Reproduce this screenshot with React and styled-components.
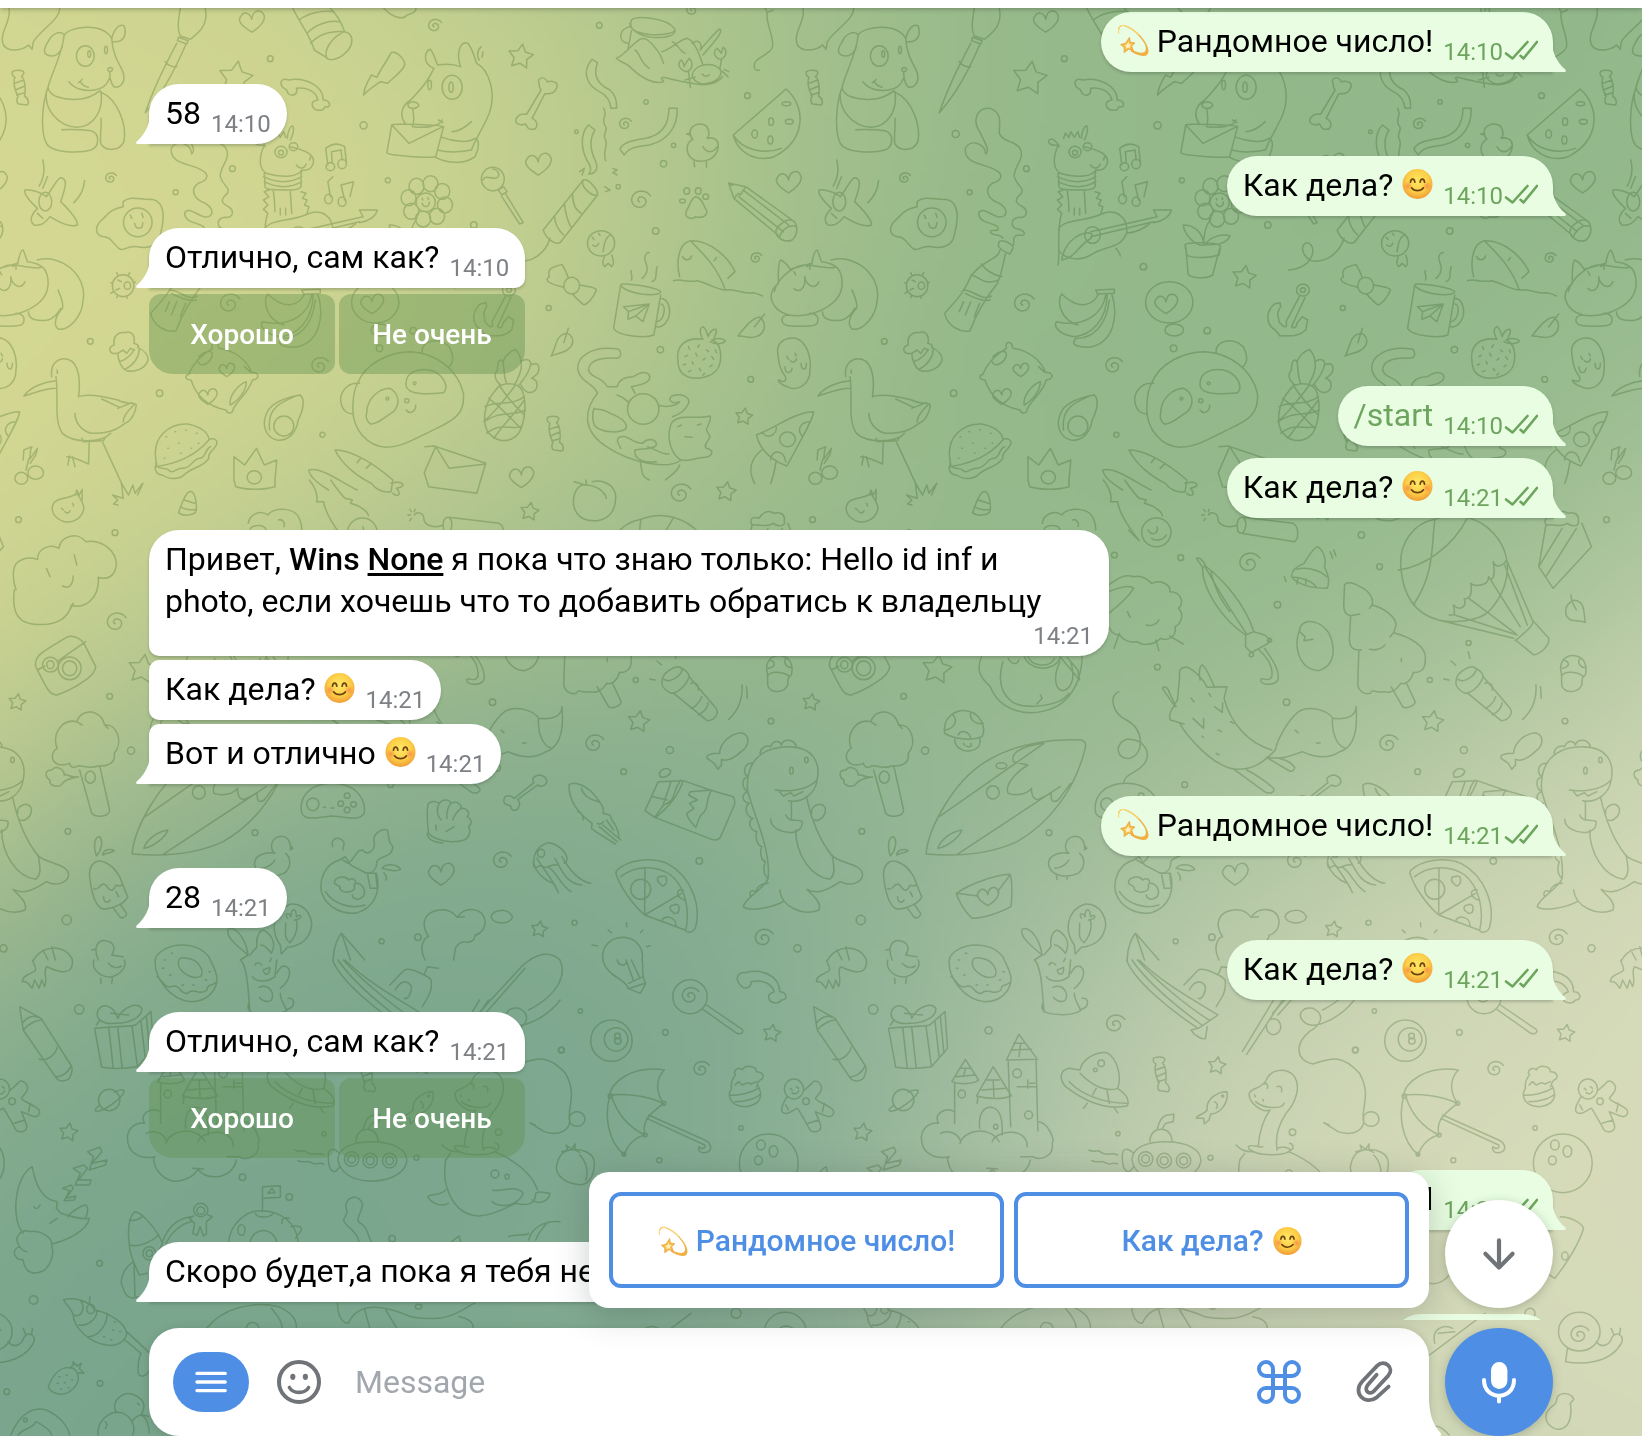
import React, { useEffect, useRef } from "react";
import styled, { createGlobalStyle, css } from "styled-components";

const BLUE = "#4e8ee4";
const GREY = "#707377";
const OUT_BG = "#e8fde1";
const OUT_GREEN = "#6da45e";

const Global = createGlobalStyle`
  html, body { margin: 0; padding: 0; }
  body { width: 1642px; height: 1436px; overflow: hidden; font-family: Roboto, "Noto Sans", sans-serif; }
  * { box-sizing: border-box; }
`;

/* ---------- wallpaper gradient ---------- */

const GRADIENT = [
  { c: [217, 220, 187], x: 0.8, y: 0.9 },
  { c: [121, 165, 141], x: 0.35, y: 0.75 },
  { c: [213, 216, 145], x: 0.2, y: 0.1 },
  { c: [145, 183, 138], x: 0.65, y: 0.25 },
];

function paintGradient(canvas) {
  const w = canvas.width;
  const h = canvas.height;
  const ctx = canvas.getContext("2d");
  const img = ctx.createImageData(w, h);
  for (let y = 0; y < h; y++) {
    const dy = y / h - 0.5;
    for (let x = 0; x < w; x++) {
      const dx = x / w - 0.5;
      const swirl = 0.35 * Math.sqrt(dx * dx + dy * dy);
      const theta = swirl * swirl * 0.8 * 8;
      const s = Math.sin(theta);
      const c = Math.cos(theta);
      const px = Math.max(0, Math.min(1, 0.5 + dx * c - dy * s));
      const py = Math.max(0, Math.min(1, 0.5 + dx * s + dy * c));
      let sum = 0;
      const rgb = [0, 0, 0];
      GRADIENT.forEach((g) => {
        const d = Math.max(0, 0.9 - Math.hypot(px - g.x, py - g.y)) ** 4;
        sum += d;
        for (let k = 0; k < 3; k++) rgb[k] += d * g.c[k];
      });
      const o = (y * w + x) * 4;
      for (let k = 0; k < 3; k++) img.data[o + k] = rgb[k] / sum;
      img.data[o + 3] = 255;
    }
  }
  ctx.putImageData(img, 0, 0);
}

/* ---------- wallpaper doodles ---------- */

const ell = (cx, cy, rx, ry = rx) =>
  `M${cx - rx} ${cy}a${rx} ${ry} 0 1 0 ${rx * 2} 0a${rx} ${ry} 0 1 0 ${-rx * 2} 0`;
const dots = (...list) => list.map(([x, y, r]) => ell(x, y, r, r * 1.07)).join("");
const star = (cx, cy, r, rot = 0.15) => {
  let d = "";
  for (let i = 0; i < 10; i++) {
    const a = rot - Math.PI / 2 + (i * Math.PI) / 5;
    const q = i % 2 ? r * 0.52 : r;
    d += `${i ? "L" : "M"}${(cx + Math.cos(a) * q * 0.95).toFixed(1)} ${(cy + Math.sin(a) * q).toFixed(1)}`;
  }
  return d + "Z";
};
const heart = (cx, cy, r) =>
  `M${cx} ${cy + r * 0.9}C${cx - r * 0.6} ${cy + r * 0.5} ${cx - r * 1.2} ${cy} ${cx - r * 0.9} ${cy - r * 0.4}C${cx - r * 0.6} ${cy - r} ${cx - r * 0.1} ${cy - r * 0.7} ${cx} ${cy - r * 0.2}C${cx + r * 0.1} ${cy - r * 1.1} ${cx + r * 0.8} ${cy - r * 1.1} ${cx + r} ${cy - r * 0.5}C${cx + r * 1.1} ${cy} ${cx + r * 0.5} ${cy + r * 0.6} ${cx} ${cy + r * 0.9}Z`;
const swirl = (cx, cy, r) => {
  let d = "";
  for (let i = 0; i <= 26; i++) {
    const a = 2.2 + i * 0.38;
    const q = r * (0.12 + (0.88 * i) / 26);
    d += `${i ? "L" : "M"}${(cx + Math.cos(a) * q).toFixed(1)} ${(cy + Math.sin(a) * q).toFixed(1)}`;
  }
  return d;
};
const petals = (cx, cy) => {
  let d = "";
  for (let i = 0; i < 8; i++) {
    const a = (i * Math.PI) / 4 + 0.2;
    d += ell(cx + Math.cos(a) * 52, cy + Math.sin(a) * 54, 21, 24);
  }
  return d;
};

const CANDY =
  "M690 215C695 210 720 208 722 218C720 225 718 228 715 230C725 235 728 270 724 288C735 295 738 312 730 315L708 312C700 310 702 295 706 288C695 270 692 245 697 232C690 228 688 220 690 215ZM696 250L722 240M698 270L725 258M702 285L724 278";

const KX = 560 / 1568;
const KX2 = 562 / 1568;

const DOODLES = [
  {
    x: 560, y: 0, k: KX, d: [
      "M200 60C215 45 300 55 320 85C330 110 290 115 255 112C215 105 190 85 200 60ZM196 70C195 90 215 100 255 104C290 106 318 100 322 90M196 80C165 85 160 125 190 130M200 92L190 150M158 175C180 165 185 150 215 125C235 105 250 118 275 155C285 170 285 180 290 190M285 155C310 150 325 125 355 115C375 120 390 160 400 195M158 175C165 185 190 190 200 205C230 235 265 255 290 245C290 235 275 235 290 232C320 240 350 248 370 250C410 260 440 250 455 230M370 130C385 118 400 125 393 150C400 140 440 90 447 87C455 92 450 105 400 165M210 150C225 160 225 190 250 205M315 125C330 130 330 150 350 160",
      "M370 225C375 195 425 180 450 210C455 235 430 250 400 252C385 250 372 240 370 225ZM340 180C325 190 335 210 355 215C370 210 375 190 362 175C355 185 350 190 348 200C345 190 345 185 340 180ZM440 145C425 155 435 175 450 178C465 172 470 150 457 142C452 150 452 155 452 160C448 155 445 150 440 145ZM452 180L448 205M360 215L365 262M350 240L378 232M455 215L470 230M460 208L472 215M398 222C405 232 415 230 418 224",
      "M575 25L580 38L597 30M580 38C575 70 600 110 595 140C590 165 550 170 545 190C542 205 545 212 558 211",
      "M680 25C690 60 650 100 665 135C680 160 720 150 735 135L745 148L748 128C755 100 825 60 822 25",
      "M835 105C825 90 800 100 790 125C775 150 775 165 800 168C815 168 825 155 830 140M835 105C850 80 940 65 968 115C975 85 990 70 1003 78C1010 100 1005 130 970 125M968 115C970 160 985 185 995 205C1010 235 1000 260 980 262C970 262 962 240 962 215M835 105C830 160 800 220 790 260M958 205C965 200 975 205 968 213C960 217 955 212 958 205M848 245C860 265 890 275 920 270C940 268 955 255 962 235M875 248C880 243 885 240 885 238M880 245C885 255 895 260 902 262M790 260C790 290 835 300 870 298C900 298 920 285 935 272M785 280C780 330 820 380 870 382C920 380 945 330 938 275M790 260C770 320 770 400 785 430C800 460 880 460 910 450C935 440 935 400 910 392C880 388 850 388 828 389M935 275C990 300 1010 380 1002 425C990 455 950 455 937 430C935 400 940 380 938 355",
      ell(894, 168, 25, 31), ell(905, 162, 4, 10), ell(952, 150, 4, 11), CANDY,
      "M633 267C690 320 690 420 600 470C540 490 495 450 485 405ZM485 405C510 450 570 465 620 445",
      ell(634, 311, 12, 6), ell(591, 365, 7, 11), ell(642, 365, 11, 7), ell(545, 402, 8, 12), ell(589, 420, 7, 12),
      "M365 400L355 402L365 405C360 375 390 365 410 378C420 395 420 405 412 415C430 410 445 420 443 440C440 480 400 490 375 480C350 465 350 430 372 418C365 412 365 405 365 400M400 440C410 460 430 460 440 440M375 485L377 500M410 485L410 502",
      "M90 178L105 188C90 230 110 255 140 270C155 285 160 305 158 325L143 325C140 300 130 285 110 275C75 255 60 215 90 178ZM305 325L328 325C330 370 310 420 250 435C210 440 190 445 180 465L168 448C175 425 210 420 240 415C290 405 305 370 305 325ZM80 375L98 390C80 420 85 450 98 480C110 505 100 522 80 522M80 375C55 400 60 450 75 480C88 500 90 512 80 522M122 325C135 345 115 355 125 375C140 390 115 400 128 420C135 440 118 455 128 482",
      "M65 540C80 535 108 570 105 585C90 590 55 560 65 540ZM65 540L-47 690C-40 715 -15 735 0 728L105 585M35 580C35 600 40 630 60 640M12 610C15 635 20 660 30 680M-15 648C-15 670 -5 690 10 705M-28 715C-40 760 -80 790 -120 782C-150 765 -150 730 -130 728C-100 740 -115 805 -183 810M55 515L68 505L62 525M148 505L160 510L148 518L160 525M125 560L140 570L128 575",
      swirl(225, 602, 32), swirl(182, 373, 20), swirl(965, 535, 18), swirl(549, 775, 18), swirl(1298, 912, 33), swirl(1550, 1098, 28), swirl(370, 30, 20),
      ell(355, 573, 8, 10), ell(387, 573, 8, 10), ell(343, 603, 8, 6), ell(408, 590, 8, 8),
      "M380 590C365 595 365 615 355 630C345 655 370 660 380 650C395 655 415 650 410 630C400 615 398 592 380 590Z",
      "M472 549L487 595L610 705M472 549L520 560L650 660M487 595L500 580L505 585L520 560M500 590L625 695M515 572L640 675M605 700C600 680 635 655 648 660C665 665 670 700 650 720C630 730 610 715 605 700M615 710C620 690 645 670 660 680M474 555L485 555",
      heart(640, 547, 35), heart(1360, 65, 35),
      "M725 570C740 565 775 580 785 590C800 570 815 535 825 533C845 535 840 560 825 605C840 620 875 660 872 675C850 685 810 660 795 650C785 665 770 680 750 675C735 660 745 640 760 625C745 610 720 585 725 570Z", ell(782, 605, 18, 28),
      "M775 480C782 510 775 540 765 558M788 530L775 565M892 542C890 570 880 590 862 608M760 640L775 655",
      "M1000 605C1020 585 1050 600 1080 598C1120 605 1115 660 1105 700C1100 745 1060 745 1040 740C1010 735 1005 755 990 747C970 730 965 710 945 710C920 705 920 680 940 660C960 640 970 625 1000 620Z", ell(1041, 667, 40, 43),
      "M1032 670C1036 690 1055 690 1055 668M1020 645L1024 655M1052 640L1056 652",
      "M1160 25C1155 60 1150 85 1160 108L1188 118C1210 100 1240 75 1230 25M1155 112L1182 122L1178 132L1152 122ZM1150 130C1130 170 1090 250 1062 338C1110 280 1140 220 1175 135M1118 185C1130 200 1140 202 1150 200",
      star(1315, 235, 52),
      "M1192 462C1190 430 1150 415 1135 445C1130 490 1180 490 1210 505C1245 520 1240 540 1210 550C1185 570 1200 600 1230 610C1260 630 1250 655 1225 650C1200 640 1180 620 1172 640C1175 670 1205 665 1225 680C1235 700 1205 685 1205 695C1210 710 1235 700 1240 715M1192 462C1205 450 1190 430 1175 395C1155 365 1165 320 1205 325C1240 340 1230 370 1230 400C1240 430 1280 420 1290 450C1300 480 1270 500 1272 530C1280 560 1300 560 1292 580C1270 600 1275 610 1295 620C1315 635 1305 655 1285 652C1260 655 1260 685 1285 688C1305 695 1305 710 1285 705C1270 705 1270 715 1270 735",
      "M1230 725C1240 715 1272 735 1268 745L1260 762C1245 755 1232 748 1227 738ZM1232 750C1228 780 1180 780 1150 830C1130 880 1110 900 1077 940C1085 980 1125 1000 1148 992C1170 930 1195 890 1225 850C1240 810 1240 790 1248 760M1180 792C1195 815 1215 825 1237 830M1150 825C1170 825 1185 860 1228 840M1130 870C1160 870 1180 905 1208 888M1135 880C1160 895 1190 905 1205 900M1130 905L1118 935M1150 905L1135 945M1175 910L1160 950",
      "M1395 435C1385 460 1375 500 1400 520C1450 535 1490 530 1500 510C1530 515 1545 480 1520 460C1505 450 1490 445 1465 440M1395 435C1365 440 1360 415 1380 418C1390 425 1395 430 1398 440M1410 415L1415 400L1425 412L1430 395L1440 412L1450 395L1455 412M1460 415C1460 395 1470 375 1475 378C1480 390 1475 405 1468 420",
      ell(1442, 456, 17), ell(1442, 458, 7), ell(1477, 440, 12), "M1485 495C1495 510 1510 505 1512 492M1525 470L1522 480",
      "M1395 520C1400 560 1390 565 1410 568C1450 570 1490 575 1498 560C1500 540 1495 530 1500 515M1393 530C1430 550 1470 550 1500 530M1395 545C1430 565 1470 565 1500 545M1420 570C1425 600 1425 620 1425 635M1468 575L1472 640M1440 625L1440 645M1455 625L1455 645M1408 570L1395 575L1408 590L1393 600L1405 615L1393 628L1405 640C1390 680 1400 740 1395 795M1498 575L1512 580L1502 595L1515 600L1508 615L1520 620L1515 640M1405 780C1410 740 1440 700 1480 698C1495 700 1490 715 1480 720C1450 740 1440 775 1405 780",
      ell(1000, 857, 30, 33), ell(1012, 857, 9, 11), "M985 825L982 818M1015 825L1018 818M970 850L965 848M972 875L966 880M1030 850L1034 846M985 885L982 893M1010 888L1012 895M985 840L995 845M980 870L990 865",
      "M612 850C610 820 612 785 618 780C630 785 640 800 645 808L705 790C710 760 715 750 720 750C725 760 730 780 732 785M612 850C575 880 590 930 640 945C700 955 790 920 790 850C790 810 775 790 732 785M600 875C610 830 660 790 700 795C740 805 770 805 772 800M760 780C830 760 900 830 888 900C885 950 850 990 820 988C800 975 815 940 830 925C835 905 820 880 818 870M640 945C615 945 615 975 640 977C680 980 715 980 720 970C728 950 715 940 700 940M735 935C735 960 760 965 790 960C815 950 820 935 825 925M655 865C665 880 690 870 685 830C690 860 715 870 725 845M655 815L660 825M690 800L700 795L700 808",
      "M335 830C325 790 330 730 365 722C420 720 470 770 490 815L470 835M365 722C400 760 440 800 463 870M318 842C340 835 360 850 385 842C415 850 440 870 465 870C490 865 520 885 540 878C555 880 560 885 567 888M343 770C350 785 365 780 368 768M432 782L438 772",
      ell(115, 730, 38), "M125 768C120 780 118 795 125 800L135 790L145 800C152 795 150 780 145 765M140 705C120 720 125 740 120 755M90 712L95 718M108 700L112 706M92 735C98 742 108 738 108 730",
      "M170 855L150 985C165 1010 240 1015 263 1005L282 885M170 855C165 845 270 860 282 875C275 895 180 880 170 855ZM280 895C305 895 310 930 305 950C295 980 275 985 268 978M283 912C298 915 293 960 272 965M178 920L250 912L232 965L212 948L190 958L192 935ZM192 935L250 912L212 948M200 840C205 825 195 820 200 812M230 835C250 815 245 800 238 780C235 765 245 755 250 758M258 845C275 835 265 825 272 800",
      "M400 1018C350 1010 325 1040 330 1080C330 1120 350 1135 385 1135C430 1130 450 1110 450 1070C450 1040 440 1025 425 1020M400 1018C390 1000 390 985 400 980C410 985 412 1005 415 1010C420 990 435 985 438 990C438 1005 430 1015 430 1018C450 1012 465 1020 462 1025C450 1035 430 1032 420 1025M360 1040L363 1048M350 1070L356 1066M390 1035L386 1042M380 1060L384 1068M345 1095L352 1092M370 1085L373 1092M400 1080L406 1075M410 1050L416 1055M425 1070L430 1078M360 1115L367 1112M390 1105L394 1112M420 1100L426 1095M435 1050L438 1058M400 1125L405 1120",
      "M498 1008C515 985 540 950 560 952C580 970 575 1000 550 1010C530 1018 515 1005 498 1008ZM545 980L573 942",
      "M610 1060C605 1030 630 1010 660 1015C690 1025 705 1070 700 1110C700 1150 670 1175 640 1162C620 1155 610 1145 612 1140C630 1150 640 1140 625 1120C612 1100 612 1080 610 1060ZM635 1070L640 1078M658 1060L662 1068M645 1082C650 1090 662 1085 662 1076M630 1100C630 1120 645 1125 650 1105M675 1090C675 1110 690 1115 690 1090",
      "M985 1060C960 1065 955 1040 975 1035C970 1005 990 995 1005 998C1025 990 1035 1010 1030 1030C1045 1035 1045 1040 1040 1042C1060 1050 1075 1070 1068 1085C1060 1105 1035 1118 1010 1112C995 1105 985 1080 985 1060M985 1060L1000 1050L1010 1060L1020 1045L1032 1050M990 1085C1010 1080 1025 1060 1030 1050M1005 1108C1030 1095 1045 1070 1045 1048",
      "M1250 1045C1245 1030 1255 1022 1265 1032L1268 1045C1305 1050 1345 1075 1360 1118C1375 1115 1385 1130 1370 1138L1362 1140C1350 1180 1320 1200 1308 1228C1305 1245 1290 1240 1288 1230C1240 1220 1205 1190 1190 1140C1175 1140 1170 1128 1185 1122C1195 1090 1225 1060 1250 1045ZM1345 1145C1320 1155 1295 1190 1300 1215C1325 1200 1345 1170 1345 1145ZM1212 1070C1225 1055 1250 1045 1250 1065C1245 1090 1215 1105 1210 1085M1340 1100L1355 1115",
      heart(1290, 1110, 22), heart(1237, 1190, 26),
      "M1500 870L1552 868L1552 880L1505 882ZM1508 882C1490 920 1450 930 1405 882C1390 900 1400 960 1450 975M1528 885C1520 940 1470 985 1390 965C1380 980 1400 1005 1440 1010C1490 1005 1530 960 1532 885M1545 882C1565 950 1550 1030 1480 1042C1440 1042 1430 1030 1445 1015C1490 1015 1530 980 1538 900",
      "M1495 1185C1510 1195 1505 1230 1490 1260C1485 1300 1460 1325 1430 1320C1395 1310 1390 1270 1400 1245C1410 1205 1470 1190 1495 1185ZM1480 1190C1420 1215 1405 1240 1410 1290", ell(1450, 1278, 28, 30),
      "M165 1048C170 1055 175 1070 160 1075C120 1070 80 1080 80 1110C85 1135 120 1130 132 1160L160 1160C165 1140 180 1130 205 1130C220 1120 240 1110 250 1125C258 1145 230 1155 200 1160L210 1180M165 1048C90 1035 45 1070 50 1110C60 1150 95 1150 105 1180C60 1240 70 1300 130 1340C200 1390 300 1410 340 1380M160 1185C175 1190 185 1200 190 1205M275 1215C300 1225 330 1215 335 1205C310 1215 300 1195 315 1187C340 1180 365 1190 360 1210C350 1235 330 1245 315 1250M315 1265C340 1240 380 1260 420 1248C425 1265 412 1275 410 1290L420 1310C415 1325 400 1335 410 1345C430 1350 430 1365 410 1372C380 1370 360 1390 335 1378C300 1350 300 1290 315 1265ZM330 1280L340 1275M350 1310L370 1312M385 1275L395 1272M95 1225C90 1240 90 1270 100 1280C120 1300 170 1300 185 1285C190 1265 165 1250 140 1240C120 1225 100 1230 95 1225ZM165 1312C190 1300 200 1330 230 1330C250 1310 270 1320 270 1335C260 1350 230 1345 210 1350C205 1380 240 1390 270 1385M170 1345C165 1330 155 1325 165 1312M245 1340C270 1350 290 1365 305 1362M225 1385C230 1410 225 1430 250 1440M335 1395C330 1415 305 1430 295 1440",
      ell(233, 1227, 44, 46),
      "M550 1305C600 1285 660 1235 710 1235C712 1250 680 1310 635 1398C590 1380 560 1350 550 1305ZM568 1297C575 1320 610 1305 605 1280M700 1265C675 1265 660 1290 680 1310M590 1380C590 1350 625 1345 632 1385M565 1350C535 1375 525 1410 545 1450M605 1385C600 1410 600 1425 590 1450", ell(637, 1318, 22),
      "M720 1380L722 1350L745 1340C735 1355 745 1370 735 1380L728 1410M738 1378L760 1345L755 1365L740 1390", ell(755, 1418, 22, 20), ell(715, 1435, 18, 18),
      "M800 1130C795 1090 820 1070 845 1078C880 1090 880 1150 875 1190C900 1180 950 1190 985 1200C1010 1215 1035 1205 1037 1215C1035 1240 1020 1265 1005 1270C970 1300 940 1300 910 1300C880 1290 865 1265 865 1240M812 1130C820 1200 805 1260 830 1300C860 1330 940 1330 965 1300M812 1142C780 1145 740 1160 722 1188C750 1180 780 1165 812 1165M985 1225L1025 1208M1000 1265C1000 1250 1015 1230 1030 1215M940 1197L990 1222M885 1315L888 1325L945 1322L950 1312M905 1328L903 1392C880 1380 860 1370 842 1370M850 1368L845 1395M858 1370L865 1400M943 1328L1000 1460M815 1110L816 1120",
      "M1092 1380C1080 1310 1130 1270 1180 1272C1220 1280 1240 1300 1240 1320C1200 1370 1150 1390 1092 1400ZM1240 1318C1260 1312 1268 1325 1258 1340C1250 1355 1235 1360 1240 1375C1225 1400 1200 1400 1175 1420C1160 1440 1130 1440 1110 1425C1090 1425 1085 1400 1095 1392M1095 1400C1110 1410 1120 1400 1130 1412C1140 1425 1150 1400 1170 1405C1195 1400 1195 1375 1215 1375C1235 1370 1225 1350 1245 1340M1120 1310h2M1145 1295h2M1175 1290h2M1205 1300h2M1125 1345h2M1155 1330h2M1160 1360h2M1190 1345h2M1210 1330h2M1115 1375h2",
      star(515, 1250, 26),
      dots([110, 76, 8], [241, 306, 6], [525, 287, 8], [46, 395, 5], [318, 436, 6], [290, 491, 9], [163, 560, 6], [268, 693, 9], [281, 1049, 9], [534, 1138, 8], [1108, 402, 10], [1412, 176, 8], [1306, 506, 8], [1147, 577, 7], [908, 1024, 8], [1102, 1180, 9], [1558, 1304, 7]),
    ],
  },
  {
    x: 0, y: 0, k: KX, d: [
      "M790 260C780 240 795 235 808 240C850 230 905 255 905 300C925 300 930 325 910 320C905 335 880 335 875 318C870 305 885 300 890 300C885 275 860 260 830 265C835 285 815 292 805 278C805 265 795 268 790 260Z",
      "M820 25C840 70 870 110 880 150L918 175M925 25C950 50 960 80 965 95C990 100 990 130 975 150C955 175 930 185 915 175C905 150 930 110 965 95M838 60C860 40 900 30 935 35M860 100C880 75 920 60 950 65M870 130C890 105 920 92 965 95",
      swirl(1217, 78, 22), "M1075 25C1100 55 1130 60 1140 45C1160 40 1165 30 1165 25",
      "M1095 158C1110 150 1135 180 1133 195C1130 210 1110 225 1085 250L1065 245C1045 260 1030 270 1018 285C1020 260 1030 245 1040 225L1055 232C1070 200 1085 180 1095 158Z",
      "M1215 205C1180 190 1190 150 1205 148C1215 160 1220 185 1225 195C1250 190 1270 192 1290 200C1275 160 1290 120 1310 130C1325 150 1325 165 1335 190C1370 210 1390 280 1370 340C1355 380 1330 420 1320 450M1215 205C1200 240 1185 260 1150 300C1120 320 1120 350 1135 372M1142 315C1145 300 1175 305 1172 318C1165 328 1145 328 1142 315ZM1155 325C1160 350 1160 365 1155 380C1190 385 1230 380 1238 360M1228 360L1240 368M1265 395C1285 395 1305 380 1320 365M1097 375C1095 370 1240 375 1242 380L1220 470C1190 475 1085 465 1083 458ZM1097 375L1145 430L1240 380M1238 412C1270 425 1310 430 1330 415C1345 420 1340 450 1330 470C1300 495 1250 490 1220 472M1225 450C1260 460 1300 455 1318 450M1348 140C1335 150 1335 170 1342 180M1352 155L1350 172",
      ell(1266, 262, 28, 36), ell(1263, 262, 6, 15), ell(1203, 255, 5, 14),
      star(1458, 170, 38),
      "M1510 250C1500 235 1525 225 1532 245C1550 240 1570 250 1555 270C1550 285 1530 280 1525 282L1490 355C1510 365 1505 390 1490 388C1480 390 1475 380 1472 372C1450 380 1435 365 1450 350C1455 340 1470 342 1475 342L1515 270C1510 262 1508 258 1510 250Z",
      heart(1507, 493, 36), ell(1192, 607, 27, 28), petals(1195, 604), "M1182 610C1186 625 1202 622 1202 606M1182 595L1184 600M1198 593L1200 598",
      ell(1380, 537, 32, 35), "M1352 540C1360 520 1385 545 1395 530C1400 520 1390 505 1380 508M1395 570L1410 560L1420 575L1405 585ZM1405 590L1455 672L1465 668L1415 580",
      "M918 495L912 445C930 430 950 430 965 440L970 490M930 490L928 455L955 450L958 480M925 590L918 545L932 530M965 600L955 555L990 545L980 590", ell(925, 500, 12), ell(958, 492, 12, 14), ell(920, 597, 11, 14), ell(958, 605, 11, 14),
      "M655 1440L655 1370L685 1395L718 1345L740 1395L775 1380L770 1440L770 1460C740 1470 690 1470 660 1460Z", ell(712, 1432, 20),
      "M938 1350C970 1348 1030 1375 1100 1440L1095 1475C1070 1480 1050 1465 1040 1450C1000 1430 955 1390 938 1350ZM1010 1375L1000 1388M1040 1390L1025 1405M1095 1450C1130 1440 1140 1460 1110 1465C1125 1480 1115 1495 1100 1480M865 1410C900 1400 960 1450 1000 1470M865 1410C865 1430 890 1450 920 1470",
      "M1190 1340L1215 1338L1360 1390L1335 1480L1200 1460L1188 1418L1220 1340L1258 1405L1360 1392", heart(1460, 1432, 34),
      dots([1018, 376, 10], [1086, 541, 7]),
    ],
  },
  {
    x: 1080, y: 0, k: KX2, d: [
      "M-60 690C-50 655 20 665 60 642C100 625 135 650 130 700C110 750 70 735 30 765C-10 790 -50 770 -60 750M30 695L215 650M30 710L205 665M215 650L205 630L255 630C250 650 230 665 205 668M130 700C165 695 185 680 195 670M100 745C108 755 112 765 112 768", ell(35, 705, 22, 25),
      "M295 740L302 825C320 838 355 835 370 825L390 745M293 735C290 725 390 725 392 740L388 765C360 775 310 775 298 765ZM345 735C345 700 350 680 365 655M345 735C320 740 290 700 288 675C320 675 345 700 345 735ZM348 735C360 710 400 700 418 708C410 735 370 735 348 735Z",
      star(458, 832, 36), ell(249, 907, 66, 62), heart(240, 912, 32), ell(263, 990, 26, 18), ell(261, 1045, 9, 10),
      ell(622, 870, 18), ell(622, 870, 7),
      "M612 890L575 965C580 985 570 985 555 965C555 945 545 945 560 920L558 908L542 912C515 940 520 975 545 990L558 1008C580 1005 605 1015 630 990L635 960L620 950L605 970C605 985 595 985 590 980L628 892",
      "M735 830C725 800 755 800 770 793C780 810 785 825 788 835M735 830C720 840 730 850 775 862M820 855C840 860 865 860 866 870C860 890 840 915 830 914C815 900 805 890 800 882", ell(797, 857, 22, 25),
      "M740 1068C755 1040 750 1005 785 1000C805 1010 805 1035 785 1050C765 1062 755 1060 740 1068ZM775 1028L788 985",
      "M200 1150C220 1090 290 1055 350 1055C420 1060 480 1110 495 1180C500 1240 470 1260 420 1285C370 1310 330 1340 280 1342C230 1340 180 1290 187 1210C188 1190 190 1165 200 1150ZM380 1058C375 1020 430 1010 455 1040C470 1070 465 1090 455 1100M205 1150C170 1145 145 1180 155 1215C160 1235 175 1242 187 1242M335 1150C335 1115 370 1105 400 1110C440 1120 455 1160 440 1178C410 1182 330 1190 335 1150ZM225 1240C225 1195 260 1165 290 1165C315 1180 320 1210 300 1235C270 1255 250 1275 235 1272C225 1265 222 1250 225 1240ZM335 1230C345 1245 362 1235 362 1215",
      ell(359, 1150, 4), ell(283, 1196, 4), ell(337, 1202, 6),
      "M585 1170C600 1145 645 1145 658 1170C675 1210 665 1290 640 1310C615 1330 580 1325 560 1290C545 1250 560 1200 585 1170ZM555 1220C590 1200 630 1220 665 1190M552 1265C600 1230 630 1250 668 1230M560 1300C600 1265 630 1290 655 1280M565 1195C600 1220 630 1260 655 1285M595 1155C620 1200 650 1230 665 1245M640 1155C610 1200 570 1250 555 1260M665 1200C640 1240 600 1280 580 1315M600 1155C580 1140 580 1120 590 1110C590 1080 600 1075 605 1085C615 1060 635 1050 640 1048C650 1060 655 1075 655 1085C675 1070 685 1085 682 1095C700 1085 708 1095 705 1110C705 1125 690 1130 685 1135C705 1140 705 1165 690 1175C670 1185 660 1165 655 1155M615 1150C605 1120 610 1100 605 1085M640 1150C655 1120 660 1100 655 1085M650 1155C670 1130 680 1110 682 1095",
      dots([524, 675, 9], [177, 800, 9], [733, 924, 7], [355, 992, 9]),
    ],
  },
  {
    x: 1080, y: 480, k: KX2, d: [
      "M65 0C95 40 85 65 85 65L105 65C110 110 150 160 165 182L135 150M125 0C150 40 165 55 165 55L185 60L180 70C215 80 230 100 230 108M190 150C200 170 220 160 215 140M200 175C210 185 235 180 240 165", ell(213, 157, 41, 43),
      "M440 150C435 120 445 110 455 112L595 130C612 140 610 180 598 185L450 160C440 158 440 150 440 150ZM455 112C470 125 460 155 452 160M438 135C420 145 390 140 385 120C385 95 365 95 358 105M345 88L350 95M340 105L347 105M345 122L350 115M360 88L358 95",
      swirl(472, 250, 34),
      "M662 200C650 205 640 225 625 250C605 258 590 270 590 290C605 315 650 325 690 325C698 300 690 275 682 262C688 240 680 210 662 200ZM605 268C630 260 670 270 688 290M595 292C615 290 650 305 660 322M608 295L605 312M630 297L630 315M698 215L705 235M708 210L714 228M570 290L575 305",
      "M325 235C330 230 345 240 350 258C400 300 460 370 485 455L462 465C400 420 340 330 342 262ZM342 262L350 258M350 262C380 320 420 390 465 462M365 275C380 340 400 370 418 395M462 465L462 500L475 515L485 515C490 505 500 510 500 505L525 490L530 478L515 465L485 455M500 510C520 530 540 560 535 590C525 610 510 590 505 598C500 615 540 620 552 600C560 570 530 530 515 505",
      ell(478, 524, 6), ell(529, 481, 6),
      "M80 315C100 300 120 280 150 290C175 285 190 300 200 310C230 295 255 320 250 335C285 335 290 370 275 385C290 400 285 430 265 440C270 470 245 485 225 475C200 500 170 495 160 485C140 490 120 480 110 465C90 465 85 450 80 440M80 335C110 320 140 315 150 325C135 350 110 375 80 400M110 460L95 505M212 480L220 512M250 468L288 492M132 395L140 412M185 435C200 440 215 432 220 420",
      "M615 440C630 415 670 420 695 460C715 510 710 560 665 572C620 570 600 520 607 470ZM615 440L612 455L628 470L625 482L650 478",
      "M738 315C745 300 770 312 785 322C810 335 820 360 815 375C850 385 880 410 882 435L875 458C920 470 970 500 963 540C965 570 945 580 930 577C925 600 910 615 895 610C880 635 860 640 850 635C820 640 815 625 810 640C790 645 775 630 775 610L778 510C755 510 750 490 752 470L755 407C735 405 735 385 736 370ZM755 407L780 402M815 375L808 385M778 510L785 510M808 508C825 512 845 505 850 495M875 458L865 470M868 620L900 680C910 690 935 675 935 665L912 612M896 535L897 545",
      "M990 118C930 130 890 190 895 260C900 340 930 400 1000 420C1040 430 1110 425 1140 395C1180 350 1200 290 1190 235C1180 180 1140 130 1080 112C1050 103 1020 105 990 118ZM990 118C980 200 990 280 930 375M1080 115C1040 200 960 260 888 270M1190 240C1180 260 1160 265 1153 245C1160 290 1150 310 1140 290C1140 320 1100 320 1090 310C1095 340 1090 355 1072 357C1080 380 1060 395 1042 375C1045 400 1050 405 1030 405M1190 240L1262 420M1185 255L1248 435M1140 290L1228 440M1085 355L1215 460M1045 405L1220 465M1000 420L1210 475M1262 420C1270 430 1255 445 1215 482M1262 420L1308 475C1310 500 1280 525 1265 524L1215 480",
      "M1300 135L1280 260L1320 325L1427 200L1400 130M1300 135C1290 110 1310 110 1320 115C1330 95 1350 90 1360 100C1375 95 1395 100 1390 125C1395 140 1370 140 1360 130C1340 145 1320 130 1300 135M1345 145L1280 260M1385 145L1300 290",
      "M1370 365C1350 380 1350 410 1370 420C1385 425 1400 420 1410 427C1405 405 1410 380 1395 367C1385 360 1375 360 1370 365ZM1370 345C1370 365 1380 380 1385 390",
      "M1050 600C1050 580 1080 560 1095 560C1110 565 1125 580 1125 590C1115 620 1090 640 1075 640C1055 630 1045 615 1050 600ZM1055 598C1070 610 1100 590 1105 570M1125 590L1200 685C1210 700 1195 722 1175 722L1082 640M1130 610C1135 605 1155 610 1150 630M1160 650C1155 670 1135 685 1130 685M1178 668C1175 690 1160 700 1150 705M1015 597L1030 600M1035 543L1048 555M1083 515L1088 535M1272 615C1275 650 1265 690 1235 718M1285 620L1287 655",
      "M1343 580C1335 550 1350 525 1380 527C1410 530 1415 560 1410 585C1400 590 1400 600 1400 615C1390 640 1355 640 1345 620C1342 605 1345 590 1343 580ZM1343 590C1350 570 1390 575 1405 590M1350 540C1365 545 1370 560 1345 565M1395 535C1385 550 1400 565 1410 562",
      star(984, 725, 33), swirl(860, 792, 30),
      "M278 730C300 770 370 860 435 868C480 870 510 850 545 810C550 780 580 720 610 695C640 675 690 690 705 715C740 720 770 710 770 680C775 740 770 800 725 815C690 840 650 830 620 815C590 825 570 840 520 832M535 810C470 790 420 730 402 655L410 620L355 622C345 600 320 570 300 562C280 560 275 570 278 590L272 660C255 690 245 705 252 720L290 732M265 680L230 625C235 615 248 625 250 640L268 680M335 600C330 575 335 555 342 555C355 565 365 600 375 620M705 715C700 760 720 800 738 803M430 868L515 935C530 945 545 935 540 925C520 905 485 880 465 870M525 835L580 870C595 880 600 865 598 860C590 850 575 840 555 835M315 715L345 745L345 715M375 680L397 697L398 668M310 655L318 665M360 640L365 650M385 750L395 755M340 768L345 772M380 820L388 825M420 725L428 730M600 750L608 758M660 790L670 788",
      "M1210 820C1210 790 1240 760 1270 758C1295 765 1295 795 1270 815C1250 835 1230 845 1215 838L1215 855L1205 868L1195 850L1175 835C1170 825 1185 820 1210 820Z",
      "M108 635C80 650 90 700 130 720C180 750 180 820 140 835C100 840 95 790 130 778C180 775 200 820 180 850C160 880 125 880 122 908",
      "M150 1140C110 1150 90 1200 100 1240C115 1285 160 1305 200 1298C250 1280 265 1230 252 1180M110 1235C130 1270 180 1290 220 1275M150 1140L165 1130L180 1155L225 1180L250 1180L255 1225L235 1225L228 1185M135 1210C135 1190 165 1185 175 1200C190 1190 200 1205 190 1215C200 1240 150 1245 150 1220ZM195 1210C215 1210 225 1235 215 1250C200 1265 185 1255 185 1245",
      "M690 1150C700 1180 720 1200 745 1210M700 1135C720 1170 745 1200 760 1238M730 1160C760 1180 760 1210 795 1235M750 1135C770 1170 780 1210 825 1215M770 1130C790 1170 820 1205 850 1210",
      "M132 1440C130 1400 150 1365 155 1360L220 1440M155 1360L180 1440",
      dots([785, 165, 9], [281, 233, 8], [96, 225, 8], [836, 260, 8], [551, 374, 9], [216, 561, 8], [1084, 489, 7], [976, 600, 7], [1353, 723, 8], [1071, 810, 10], [942, 875, 8], [292, 914, 8], [1153, 1143, 9], [805, 1328, 7], [368, 1372, 9], [267, 1384, 7], [1427, 1405, 10], [1469, 119, 8]),
    ],
  },
  {
    x: 560, y: 480, k: KX, d: [
      "M275 905L345 902L420 930L485 950C490 960 490 970 488 975L450 1070C445 1080 435 1082 425 1078L265 1012L238 992L275 905M345 902C330 950 300 985 268 1012M338 900C310 940 330 960 290 975L265 1012M260 950L300 960M310 908L290 970M365 935L425 930C405 960 420 985 395 1005C385 1020 385 1035 380 1042C370 1030 355 1015 355 1000L375 985L362 970L385 960L360 945ZM278 880C285 865 300 860 310 872C310 885 295 895 280 890Z",
      "M603 930C630 935 690 935 720 900C730 850 710 800 640 800C560 800 520 850 525 930C540 1000 590 1100 583 1195C570 1230 520 1250 513 1280C530 1295 590 1285 625 1265M615 1230C620 1280 680 1310 725 1290C735 1265 700 1240 692 1228C720 1245 750 1230 785 1205C810 1220 850 1210 847 1180C840 1150 780 1150 760 1125C720 1070 700 1000 690 950M648 965L648 1018M632 1005C640 1030 665 1015 678 1025C680 1060 640 1065 610 1048C595 1040 590 1030 590 1018M705 1000C700 980 730 960 743 985C745 1010 725 1025 712 1020M660 1050C660 1120 700 1190 755 1198C775 1180 765 1150 762 1125M640 962C680 970 715 940 720 900M615 935L625 948L645 938L655 948L680 935M590 800C595 780 615 780 620 795C625 775 655 775 662 800M560 820C562 800 580 795 590 800M537 850C515 850 510 880 527 890C505 895 510 925 525 935C505 945 510 965 530 970C515 980 520 1010 540 1015C525 1025 530 1050 552 1055C545 1065 550 1095 565 1100C560 1110 560 1140 575 1145C570 1160 565 1180 583 1195M583 1210C560 1210 550 1225 548 1235C530 1225 530 1245 535 1250",
      ell(648, 872, 5, 10), ell(690, 840, 5, 8),
      "M850 850C800 870 790 820 815 805C800 760 830 715 870 725C885 680 940 690 948 735C985 730 1000 790 975 820C980 850 955 860 930 858C900 870 875 850 870 860C860 865 850 860 850 850M870 725L885 735M948 735L958 745M878 870L912 1000C925 1015 962 1010 962 990L935 860M875 890C850 895 845 880 835 885C835 865 810 855 800 870C780 870 780 890 795 900C790 920 825 925 830 910C840 895 860 895 875 890", ell(908, 892, 14, 18),
      "M1077 760C1070 710 1110 690 1135 692C1175 695 1195 740 1182 770C1150 785 1100 775 1077 760ZM1105 778C1105 800 1125 815 1145 813C1170 810 1180 795 1175 772M1100 705C1115 720 1105 745 1080 750M1150 695C1145 720 1165 735 1185 730M1115 765C1120 750 1145 750 1150 775M1130 790L1132 796M1150 790L1152 795M1138 798C1142 802 1150 800 1152 797",
      "M1025 1122C1030 1050 1100 900 1200 840C1280 790 1380 775 1460 780C1475 785 1473 800 1468 815C1440 930 1370 1030 1280 1085C1200 1125 1110 1130 1025 1122ZM1062 1010L1355 790M1110 1125L1400 920M1270 845C1260 820 1290 800 1350 790M1270 845L1310 855C1270 880 1245 920 1255 940C1280 950 1310 940 1320 925C1320 950 1330 965 1345 955L1375 940C1375 965 1380 970 1395 960L1430 910M1058 1105C1065 1080 1095 1055 1125 1050C1120 1070 1085 1100 1058 1105Z", ell(1212, 937, 18, 20), ell(1236, 857, 15, 9),
      "M75 15C50 10 35 40 38 75C45 110 70 125 105 122C145 115 160 80 155 40C145 5 110 0 90 5M75 15C95 15 125 30 130 55M75 15L72 0M40 5L70 15", swirl(337, 42, 33), star(465, 35, 30),
      "M1180 530C1165 570 1175 590 1205 620C1230 690 1310 720 1390 680C1440 650 1460 590 1462 530M1240 545C1225 600 1235 640 1265 665C1300 690 1400 680 1425 640M1300 528C1310 570 1380 580 1400 535M1310 528C1320 560 1370 565 1385 535M1255 535C1265 555 1280 555 1285 540M1400 545C1380 590 1385 630 1410 632C1440 620 1440 580 1430 545M1335 672L1350 655L1345 645M1400 530L1455 600L1450 570L1420 532",
      "M25 915C40 900 80 920 100 950C120 975 125 990 120 1000L140 1005L145 1020C160 1040 165 1060 165 1075M25 915C25 960 50 1000 90 1030L88 1045L100 1055L155 1092M60 925C65 950 90 960 108 965M50 995C60 995 65 1010 65 1020M110 1040L160 1085M120 1035L170 1080M130 1020L150 1050M105 1030C110 1035 118 1030 122 1025",
      "M1472 1100L1475 1105L1468 1110C1472 1080 1455 1065 1435 1070C1410 1080 1412 1110 1425 1120C1400 1115 1365 1125 1368 1155C1375 1190 1420 1195 1450 1180C1470 1165 1472 1135 1455 1120M1385 1165C1405 1165 1420 1150 1425 1140M1390 1188L1392 1198M1420 1190L1420 1198",
      "M1110 1240C1150 1210 1220 1185 1260 1183C1268 1200 1265 1270 1262 1280C1230 1300 1180 1315 1155 1315C1135 1300 1115 1260 1110 1240ZM1110 1240L1170 1248M1260 1185L1225 1235", heart(1198, 1250, 30),
      "M160 1170C190 1140 250 1130 300 1150C370 1190 395 1280 380 1340C375 1360 355 1360 350 1350L237 1305C200 1270 170 1220 160 1190C155 1180 155 1175 160 1170ZM170 1190C210 1155 270 1155 310 1185C350 1220 365 1290 352 1350M238 1165L237 1305M237 1305L340 1240M285 1190C270 1185 270 1205 280 1210C285 1225 300 1215 298 1200C300 1190 290 1185 285 1190ZM320 1275C305 1275 305 1290 315 1295C320 1305 335 1300 333 1285C335 1275 325 1270 320 1275ZM285 1325C285 1305 325 1305 325 1338M345 1230C325 1225 320 1250 352 1262", ell(226, 1228, 28, 30),
      swirl(570, 1375, 30),
      "M120 1440C115 1400 140 1372 178 1372C215 1375 235 1405 230 1440M90 1395L105 1398M135 1350L143 1358M186 1328L187 1340M232 1350L225 1358M253 1397L242 1400",
      "M1350 1425C1310 1390 1290 1370 1293 1350C1305 1335 1340 1360 1350 1425M1355 1425L1375 1400C1370 1370 1385 1340 1400 1355C1425 1375 1425 1400 1415 1420C1405 1405 1395 1395 1385 1395M1350 1425L1328 1440",
      "M1443 1422L1440 1395C1410 1350 1420 1290 1470 1272C1515 1270 1535 1320 1525 1350C1515 1390 1480 1400 1460 1402ZM1455 1330C1455 1360 1450 1375 1467 1388C1483 1370 1490 1345 1485 1320M1460 1315C1450 1300 1465 1295 1470 1310C1470 1285 1485 1280 1485 1310C1500 1300 1505 1315 1480 1320",
      "M750 1440C770 1395 840 1390 858 1440M800 1400L810 1440M775 1410L790 1440M930 1440C915 1400 930 1380 950 1382C975 1385 980 1405 968 1425L1000 1430M912 1410L922 1408",
    ],
  },
  {
    x: 0, y: 480, k: KX, d: [
      "M100 560C95 530 110 520 190 470C210 465 230 480 235 490L268 560C268 590 200 630 160 645C140 645 135 635 100 560ZM105 570L125 558M160 545L240 485", ell(141, 554, 22), ell(141, 554, 10, 12), ell(195, 565, 32, 34), ell(195, 565, 20, 22),
      "M45 330C35 300 30 250 60 240C75 230 95 235 105 238C105 205 140 190 165 205C170 165 220 155 240 185C290 175 330 220 325 260C320 290 300 300 275 292C280 350 240 390 200 375C190 420 150 440 90 432C40 425 35 380 40 330M130 265L140 290M208 225L215 255M175 318C195 330 205 310 205 288M205 370L198 385",
      "M150 70C160 50 190 60 215 40C225 55 235 70 235 85C230 115 205 130 180 125C150 115 140 90 150 70ZM212 45L215 30L222 45L230 28L230 60M172 85L178 90M203 70L206 78M182 95C188 102 195 98 196 92",
      "M330 75L318 72L330 60L315 45L345 55L340 10L360 45L372 15L378 40L400 10L385 45",
      "M530 35C545 30 550 60 550 90C545 110 510 108 500 98C510 70 515 45 530 35ZM515 60L545 70M505 80C515 88 535 92 550 88",
      "M695 130C700 100 730 90 750 105C765 80 830 80 840 120C845 135 845 150 845 150M700 148C705 135 740 130 745 150M780 120C790 115 800 130 795 140",
      swirl(325, 428, 32), star(400, 568, 45), star(48, 667, 26), star(1483, 95, 28), star(1510, 1348, 25),
      "M845 1000C835 950 870 910 930 910C990 910 1025 950 1020 1000C1005 1025 970 1010 930 1008C890 1010 860 1025 845 1000ZM905 982h6M928 984h6", ell(876, 973, 17, 19), ell(972, 947, 8), ell(954, 971, 8), ell(990, 973, 8), ell(972, 990, 8),
      "M1412 955C1405 975 1425 975 1430 978C1430 995 1450 995 1452 980C1460 970 1450 960 1450 958L1505 915C1520 925 1535 910 1530 900C1530 890 1520 890 1515 885C1505 885 1490 890 1492 900L1495 908L1440 955C1430 945 1415 945 1412 955Z",
      "M1200 1060C1195 1020 1195 980 1200 970C1210 960 1225 965 1230 970C1240 955 1260 958 1262 970C1280 960 1295 975 1290 985C1315 985 1315 1005 1308 1010C1325 1020 1320 1035 1312 1040C1320 1055 1312 1075 1300 1080C1270 1090 1220 1085 1200 1060ZM1197 1060C1195 1075 1215 1090 1240 1088M1230 970C1220 990 1225 1010 1235 1020M1262 970C1250 990 1250 1005 1252 1015M1290 985C1275 1000 1270 1010 1268 1020M1248 1055L1272 1040M1220 1035L1222 1050",
      "M262 1150C285 1130 320 1160 335 1190C345 1215 350 1235 358 1250C350 1270 320 1285 290 1288C265 1280 255 1230 252 1200C248 1175 252 1160 262 1150ZM262 1225C275 1235 275 1215 290 1212C305 1215 300 1235 315 1230C325 1225 320 1210 330 1218L345 1215M318 1285L335 1310C345 1320 358 1305 353 1298L338 1275M290 1250C290 1270 305 1270 308 1260M325 1235L332 1250M270 1128C260 1100 265 1070 278 1070C290 1080 285 1110 270 1128ZM287 1125C290 1108 310 1105 320 1112C310 1120 300 1118 287 1125Z",
      "M960 1140L975 1150C1000 1130 995 1110 1015 1110C1030 1130 1050 1110 1048 1090C1040 1060 1070 1045 1085 1050C1090 1070 1085 1085 1100 1100C1098 1135 1065 1125 1055 1145C1055 1165 1045 1180 1025 1180M932 1100C925 1080 940 1070 955 1078C970 1085 960 1100 960 1110M1070 1165C1080 1150 1110 1150 1122 1168C1110 1175 1090 1172 1070 1165ZM1075 1178C1080 1185 1085 1195 1080 1200",
      heart(1235, 1183, 36), swirl(1405, 1143, 30),
      "M1495 1160C1490 1120 1510 1090 1540 1088C1580 1100 1600 1140 1580 1150M1495 1160C1500 1170 1510 1150 1520 1160C1530 1170 1540 1150 1560 1155", ell(1515, 1120, 10, 12),
      "M1190 1440C1170 1400 1190 1370 1200 1370C1175 1330 1190 1295 1230 1290C1260 1285 1275 1305 1280 1312C1300 1280 1350 1280 1358 1320C1360 1350 1340 1365 1330 1365C1330 1385 1310 1390 1300 1385C1290 1385 1280 1395 1275 1405L1270 1440M1375 1310C1380 1290 1420 1280 1435 1310C1430 1335 1380 1335 1375 1310ZM1280 1312L1300 1310",
      "M1340 1600L1460 1460C1500 1420 1540 1410 1568 1440C1585 1480 1570 1540 1480 1590M1355 1605L1470 1465",
      dots([307, 649, 8], [367, 812, 10], [190, 1054, 8], [187, 1320, 13], [714, 1058, 8], [322, 158, 8], [1379, 667, 9]),
    ],
  },
  {
    x: 0, y: 960, k: KX, d: [
      "M55 140L65 210L155 350C165 370 195 365 198 345C205 330 200 320 200 318L115 175ZM62 190C75 170 95 165 105 172M65 210C80 190 105 180 115 180M110 298C130 305 155 285 160 262M155 350C170 352 190 340 198 320",
      "M1248 600C1235 680 1270 765 1340 768C1390 765 1420 740 1445 730C1480 740 1500 730 1500 700C1510 690 1530 700 1540 700C1535 725 1510 735 1490 720M1505 690C1490 640 1440 600 1385 575M1248 690C1230 710 1205 700 1198 710C1210 735 1240 740 1255 730M1380 690C1400 700 1440 670 1465 700M1378 725C1400 745 1450 740 1465 700M1248 600L1262 580", ell(1386, 642, 11, 12), ell(1420, 650, 6, 7),
      "M90 620C40 650 30 780 65 820M90 620C100 680 120 720 160 725L158 745L170 760C200 770 230 780 250 775C245 810 190 840 145 852M190 770C200 755 230 735 240 735C250 745 245 760 240 772M140 790L160 775M95 740C100 750 108 745 112 735M65 900C40 900 30 870 55 860C35 830 60 805 85 815C110 810 150 830 145 860C155 890 135 920 125 930C100 945 70 945 65 900M55 860C60 870 70 875 75 875M175 685L200 675L205 685L185 715L212 708L208 720L180 722L195 692ZM205 625L235 615L245 625L220 660L255 660L250 675L210 675L225 640ZM245 575L280 562L285 575L258 610L300 600L295 615L250 630L262 590Z",
      "M362 850C355 800 365 760 380 755C400 760 440 810 455 850L430 905L420 960M362 850C360 880 380 920 390 945L412 940M362 780C375 785 395 775 400 768M365 855C390 865 430 840 445 825M345 985C330 960 350 920 375 905M375 905L378 1010M345 985C350 1010 370 1020 385 1010", ell(418, 880, 18, 20), ell(418, 880, 9, 10),
      ell(562, 750, 20), ell(562, 752, 11), "M542 768L530 775L545 790L540 820L552 826L560 800L570 828L578 822L578 785L595 770L582 765M455 845C470 800 500 775 535 770M465 850C480 815 510 790 535 785",
      "M640 846C645 790 690 750 735 752C790 755 830 790 835 846M735 755L735 680L785 677L785 712L737 715M750 700L762 685L770 698ZM700 846C710 800 765 800 775 846M715 760C720 775 755 775 765 760M790 790C785 775 800 770 810 775M815 800C830 795 850 800 843 812L828 835", ell(676, 810, 10, 16),
      "M1005 845C1000 810 965 800 962 780C970 760 975 760 968 740C970 710 1000 700 1015 730C1015 760 990 780 1010 790C1030 800 1030 830 1040 845",
      "M1480 840C1490 800 1530 780 1568 785M1425 830C1440 820 1470 830 1480 820M1500 840C1510 810 1525 800 1530 790M1265 845L1285 828L1290 845",
      "M178 1020C200 1010 250 1020 265 1050C310 1060 350 1090 355 1120C350 1150 320 1160 300 1155C250 1150 205 1100 205 1065C200 1045 185 1035 178 1020ZM205 1065C230 1075 240 1040 225 1020M220 1095C250 1100 275 1070 270 1050M245 1130C280 1130 300 1090 300 1060M355 1115L420 1180M350 1140L395 1180C385 1200 385 1240 390 1245C400 1255 420 1240 420 1220M250 1035L252 1010M290 1130h3M310 1140h3M315 1110h3M335 1115h3M320 1085h3", ell(254, 1047, 11, 14),
      "M205 1225C170 1215 150 1240 135 1280C145 1305 180 1310 200 1290C225 1270 225 1240 205 1225ZM195 1225L205 1215L205 1205L215 1218L228 1210L222 1225L235 1240L215 1238M165 1250h3M185 1245h3M160 1270h3M180 1268h3M200 1260h3M170 1288h3M190 1283h3",
      "M325 1355C310 1320 345 1295 370 1302C405 1315 410 1340 395 1365M275 1425C270 1380 310 1350 340 1358C370 1370 380 1400 372 1425M395 1365C410 1370 418 1400 418 1420M370 1385C380 1365 400 1360 415 1370M295 1385L300 1395L295 1405M385 1330L390 1335",
      "M30 1425C60 1350 100 1340 130 1350C170 1370 190 1400 195 1425M50 1425C70 1400 90 1410 100 1385C120 1395 140 1410 145 1425", ell(71, 1380, 5, 6),
      "M580 1103C620 1050 700 1020 780 1040C820 1060 830 1080 830 1103M690 1103C695 1080 720 1085 725 1103M760 1045C780 1070 790 1090 790 1103M945 1030C945 1070 960 1090 975 1090C1000 1030 1060 1030 1150 1070C1200 1080 1240 1075 1250 1070M1020 1045L1035 1103M1080 1050L1110 1103M1250 1070C1290 1060 1320 1030 1330 1030M1285 1070C1310 1075 1325 1085 1325 1103", ell(1172, 1040, 9, 7),
      dots([279, 910, 8], [94, 1020, 12], [810, 711, 9], [679, 652, 9], [1098, 836, 9], [280, 1270, 8], [19, 1295, 8]),
    ],
  },
  {
    x: 560, y: 960, k: KX, d: [
      "M120 0C130 50 190 60 190 85L225 100L240 70C225 45 235 20 230 0M192 70L232 50M195 85L238 70M160 0C165 20 190 20 185 0L205 60M200 0L222 50",
      "M1330 0C1350 30 1350 100 1355 155C1380 165 1430 170 1458 152C1450 130 1440 120 1440 100M1440 85C1470 60 1475 20 1450 18C1440 20 1435 30 1430 40M1380 82C1410 70 1425 100 1415 120C1405 130 1385 120 1382 112M1462 115C1480 110 1485 140 1460 148M1352 130C1348 140 1350 150 1358 155M1370 15C1372 5 1385 8 1388 15M1410 5L1415 -5M1392 30C1395 50 1412 45 1410 22ZM1362 50C1370 65 1400 70 1425 50L1430 0",
      "M718 65C715 45 750 40 755 30C755 10 740 0 750 0M718 65C735 60 738 80 745 85L752 60L765 85L772 60L780 80C790 60 775 40 785 20C800 25 830 45 850 30C860 20 858 5 858 0",
      "M918 0C910 30 940 55 970 50C1000 40 1010 15 1003 0M958 10C970 25 985 25 995 18M937 55L938 70M970 55L968 70",
      "M1090 0C1085 50 1130 120 1190 125C1250 125 1270 70 1260 40C1255 20 1245 5 1240 -10C1215 -45 1160 -55 1120 -35C1095 -20 1090 -10 1090 0ZM1155 5C1150 30 1190 60 1215 50C1230 40 1215 0 1180 -5C1165 -10 1155 -5 1155 5ZM1095 50C1110 60 1115 85 1135 80C1160 70 1160 105 1180 100C1200 80 1215 110 1235 90C1235 70 1250 80 1262 65M1110 25h4M1130 45h4M1165 75h4M1195 75h4M1230 60h4M1115 0h4M1135 -20h4M1240 35h4",
      "M920 205C960 200 1020 200 1035 195L1078 155M920 205L940 322C970 327 1010 325 1040 320L1085 265L1078 155M1025 200L1040 320M960 205L972 322M985 203L997 322M1050 185L1062 295M1065 170L1075 280M980 190C940 195 920 175 930 150C945 125 975 140 985 175C1000 140 1040 125 1052 145C1055 175 1010 190 980 190M925 195L935 180M965 160L1015 165",
      ell(364, 110, 48, 51), swirl(364, 108, 28), "M400 148L495 220C510 225 515 215 510 208L410 135",
      "M505 75C490 60 495 35 520 38C560 25 615 45 615 95C635 95 640 120 620 120C610 135 580 130 585 105C590 98 600 95 600 95C590 65 560 60 535 65C535 85 515 90 505 75Z",
      ell(144, 242, 58, 62), ell(157, 238, 33, 35), ell(161, 228, 8), ell(162, 243, 9),
      star(593, 220, 27), star(847, 517, 28), swirl(395, 328, 26),
      "M480 385C475 350 500 345 488 340C490 320 510 325 510 330C520 312 550 318 550 335C570 335 575 355 560 360C550 370 555 375 550 380M480 385C465 410 480 440 520 440C560 435 570 410 555 378M490 375L500 365L510 375L525 368L535 372L550 365M476 405C500 410 540 395 555 385M490 425C520 425 550 415 562 402",
      ell(655, 387, 27, 30), "M635 410C630 425 615 440 622 455C635 470 650 450 665 445C675 460 690 490 700 510C710 520 730 515 730 500C728 485 720 470 715 455C730 460 745 470 755 470C770 465 768 450 760 445C740 430 720 425 715 415C720 405 735 395 732 380C725 360 710 360 705 370L685 390M645 385L650 390M662 380L668 385M650 398C658 405 665 400 668 393M632 435L640 450M695 490L725 480M740 430L735 455", ell(689, 424, 9, 10),
      ell(961, 420, 30, 32), "M935 435C915 450 920 458 935 452C960 445 1005 405 1003 392C998 388 985 390 975 397",
      "M1135 298L1097 365C1120 375 1160 372 1172 360ZM1213 320L1166 408C1200 418 1240 418 1264 408ZM1285 223L1250 300L1337 298ZM1105 370L1105 490M1170 412L1168 430M1255 305L1262 500M1333 300L1338 512M1175 505C1170 450 1195 440 1207 442C1235 445 1240 480 1238 525M1110 350C1125 350 1150 345 1165 345M1122 325L1150 325M1180 390L1250 385M1195 360L1230 360M1262 270L1320 268M1270 250L1300 250M1310 360L1310 385M1280 380L1333 380M1315 370L1330 370M1135 325L1130 350M1213 360L1215 410M1290 250L1285 290M1090 590C1050 600 1010 580 1012 530C1015 500 1040 485 1060 490C1045 460 1080 440 1105 455M1120 540C1110 515 1080 510 1065 520M1120 550C1130 510 1200 495 1230 545M1210 545C1220 510 1310 500 1308 560M1340 485C1370 490 1385 540 1378 550C1385 590 1340 605 1325 590M1290 590L1325 590M1085 590C1085 640 1125 665 1150 664C1185 660 1205 640 1210 625C1220 660 1305 665 1317 600M1195 625L1225 627", ell(1125, 402, 10, 12), ell(1280, 340, 12, 13), ell(1312, 465, 11, 12), ell(1220, 500, 6, 7),
      "M292 330C200 315 140 370 140 405C125 460 130 540 180 585C190 550 215 530 238 525C230 490 240 470 290 430C270 400 265 360 292 330ZM140 405C180 400 240 405 290 430M145 410C160 460 190 500 238 525M248 465L405 540C425 550 430 575 405 578C390 580 385 565 390 560C395 570 410 565 405 555L243 475", ell(141, 408, 6, 7), ell(290, 430, 6), ell(238, 525, 6), ell(179, 583, 5, 6),
      "M-10 620C-5 585 10 575 20 572C60 560 100 580 96 615C95 655 75 675 55 674C20 672 -12 650 -10 620ZM5 575L22 570L17 555L33 568L42 552L42 570L55 577M55 585C75 605 80 640 72 660",
      dots([877, 148, 13], [1200, 211, 10], [57, 153, 6], [295, 217, 8], [507, 504, 6], [278, 601, 7], [493, 1060, 14], [4, 270, 8]),
    ],
  },
  {
    x: 1080, y: 960, k: KX2, d: [
      "M0 330C5 300 40 275 75 278C110 300 115 360 105 385C80 395 40 385 0 340M105 385C140 410 135 430 132 437C80 450 20 430 -40 380C-60 355 -55 330 -30 325L0 330M-30 365C0 400 60 430 130 430M45 385L35 405M75 390L82 430M20 430L10 445M95 443L105 458", ell(59, 310, 9, 10), ell(43, 330, 5),
      star(382, 317, 27),
      "M355 450C350 420 380 395 410 395C415 425 395 460 365 462L360 480L347 492L345 475L325 475C325 465 345 465 355 450ZM375 425C385 430 385 440 380 445", ell(398, 408, 3),
      "M130 0C150 60 250 150 330 205L385 165C300 110 220 60 165 0M145 0C190 70 270 140 340 195M160 0C210 60 300 140 360 180M330 205L310 210C320 230 345 240 350 235L355 200M290 75L330 30C345 20 400 50 405 60C410 100 390 120 380 140M305 90C320 60 340 60 350 80C350 100 340 120 330 115M385 45L395 20L425 25",
      "M453 275L540 120M465 283L565 120", ell(540, 200, 20, 24),
      "M765 120C730 170 660 210 630 190C600 165 620 140 650 145C680 160 680 190 640 215C600 250 600 300 650 312C700 295 730 280 780 340C810 400 790 430 790 470C800 510 760 530 720 515L680 488L695 495", ell(812, 477, 22),
      "M530 450C510 460 470 430 472 400C480 380 505 390 520 360C530 330 570 320 595 345C620 380 600 430 575 460C550 500 545 540 550 570M530 450C510 480 500 520 497 560M490 425C510 445 560 450 570 430M470 560C480 550 500 565 510 560M470 565C490 590 570 590 588 570C580 560 560 560 550 565M435 555C450 570 460 575 480 575M590 570C600 560 590 550 585 550M515 372C520 365 525 375 523 385M550 380C560 375 565 385 562 395M487 405L489 410M510 418L512 423",
      ell(1347, 610, 82, 88), ell(1325, 555, 12, 15), ell(1360, 574, 12, 17), ell(1318, 601, 11, 13),
      "M145 600C145 560 190 545 240 545C300 545 340 570 337 605C330 650 270 665 230 663C180 660 150 635 145 600ZM150 580C130 560 118 565 118 590C118 620 125 640 140 633L150 620M195 545C195 520 210 508 225 508C245 508 255 520 257 545M215 508C220 490 225 470 243 465L262 463L260 485L245 488C235 490 232 500 230 508M25 570C40 580 50 565 60 578C75 590 85 575 105 585M33 602C50 612 60 598 70 608C85 618 90 605 105 612",
      ell(183, 597, 20, 22), ell(183, 597, 11, 12), ell(235, 602, 20, 22), ell(235, 602, 11, 12), ell(289, 602, 20, 22), ell(289, 602, 11, 12),
      ell(1393, 1115, 58), swirl(1393, 1125, 30), "M1360 1165L1355 1205C1400 1215 1480 1210 1510 1150C1520 1130 1500 1110 1485 1130C1480 1150 1460 1170 1440 1145M1490 1125L1482 1105M1505 1125L1508 1105",
      "M1340 770C1370 770 1400 790 1405 805C1390 860 1350 920 1325 955L1310 945M975 1185C1020 1150 1080 1100 1130 1060M990 1150C980 1110 1010 1090 1040 1105M1000 1120L1045 1115M1030 1425C1000 1390 980 1390 990 1425M975 970C1000 975 1020 960 1030 945", ell(1353, 888, 9, 12),
      "M1300 1370C1300 1340 1330 1340 1330 1320C1330 1300 1355 1295 1372 1308L1378 1318L1368 1330C1375 1380 1360 1410 1330 1408C1310 1400 1300 1390 1300 1370Z",
      swirl(98, 193, 31), dots([768, 270, 8], [593, 517, 9], [106, 521, 6], [364, 593, 7]),
    ],
  },
  { x: 907, y: 986.7, k: KX, d: [CANDY] },
  { x: 301, y: 346, k: KX, d: [CANDY] },
];

function Doodles() {
  return (
    <Pattern viewBox="0 0 1642 1436" aria-hidden="true">
      <defs>
        <g id="tile">
          {DOODLES.map((l, i) => (
            <path key={i} d={l.d.join("")} transform={`translate(${l.x} ${l.y}) scale(${l.k} .33333)`} vectorEffect="non-scaling-stroke" />
          ))}
        </g>
      </defs>
      {[-1588, -794, 0, 794].map((x) => (
        <use key={x} href="#tile" x={x} />
      ))}
    </Pattern>
  );
}

function Wallpaper() {
  const ref = useRef(null);
  useEffect(() => paintGradient(ref.current), []);
  return (
    <>
      <Gradient ref={ref} width={274} height={240} />
      <Doodles />
    </>
  );
}

/* ---------- layout ---------- */

const Page = styled.div`
  position: relative;
  width: 1642px;
  height: 1436px;
  overflow: hidden;
  display: flex;
  flex-direction: column;
  color: #000;
`;
const Gradient = styled.canvas`
  position: absolute;
  inset: 0;
  width: 100%;
  height: 100%;
`;
const Pattern = styled.svg`
  position: absolute;
  inset: 0;
  width: 100%;
  height: 100%;
  fill: none;
  stroke: #1c4a0c;
  opacity: 0.23;
  stroke-width: 1.5;
  stroke-linecap: round;
  stroke-linejoin: round;
`;
const TopBar = styled.header`
  position: relative;
  z-index: 1;
  flex: none;
  height: 8px;
  background: #fff;
  box-shadow: 0 1px 5px rgba(60, 70, 60, 0.45);
`;
const Messages = styled.main`
  position: relative;
  flex: none;
  height: 1312px;
  overflow: hidden;
  padding: 4px 89px 0 149px;
  display: flex;
  flex-direction: column;
  gap: 12px;
`;
const Group = styled.section`
  flex: none;
  display: flex;
  flex-direction: column;
  align-items: ${(p) => (p.$out ? "flex-end" : "flex-start")};
  gap: 4px;
`;
const Bubble = styled.div`
  position: relative;
  display: flex;
  flex-direction: ${(p) => (p.$long ? "column" : "row")};
  align-items: flex-end;
  width: ${(p) => (p.$width ? p.$width + "px" : "auto")};
  padding: 8px ${(p) => (p.$out ? 15 : 16)}px 6px 16px;
  border-radius: ${(p) => p.$radius};
  background: ${(p) => (p.$out ? OUT_BG : "#fff")};
  box-shadow: 0 2px 3px rgba(60, 80, 60, 0.28);
`;
const Text = styled.div`
  display: flex;
  align-self: flex-start;
  padding-bottom: ${(p) => (p.$long ? 0 : 4)}px;
  font-size: 32px;
  line-height: 42px;
  white-space: pre;
  color: ${(p) => (p.$command ? OUT_GREEN : "#000")};
  ${(p) => p.$long && css`display: block;`}
  b { font-weight: 500; }
  u { text-decoration-thickness: 3px; text-underline-offset: 3px; }
`;
const Meta = styled.div`
  display: flex;
  align-items: center;
  gap: 1px;
  margin-left: 10px;
  height: 28px;
  font-size: 24px;
  line-height: 28px;
  color: ${(p) => (p.$out ? OUT_GREEN : "#7d8085")};
`;
const Tail = styled.svg`
  position: absolute;
  bottom: 0;
  width: 14px;
  height: 30px;
  ${(p) => (p.$out ? css`right: -13px; transform: scaleX(-1);` : css`left: -13px;`)}
  fill: ${(p) => (p.$out ? OUT_BG : "#fff")};
`;
const Keyboard = styled.div`
  display: flex;
  gap: 4px;
  width: 376px;
  margin-top: 2px;
`;
const InlineButton = styled.button`
  flex: 1;
  height: 80px;
  border: 0;
  padding: 2px 0 0;
  border-radius: ${(p) => (p.$last ? "12px 12px 24px 12px" : "12px 12px 12px 24px")};
  background: rgba(97, 145, 80, 0.41);
  font: 500 28px/32px Roboto, sans-serif;
  color: #fff;
`;
const Emoji = styled.svg`
  flex: none;
  width: ${(p) => p.$size}px;
  height: ${(p) => p.$size}px;
  align-self: center;
  margin-top: ${(p) => p.$lift || 0}px;
`;
const Footer = styled.footer`
  position: relative;
  flex: none;
  display: flex;
  gap: 16px;
  height: 108px;
  margin-top: 8px;
  padding: 0 89px 0 149px;
`;
const Composer = styled.div`
  position: relative;
  width: 1280px;
  display: flex;
  align-items: center;
  padding: 0 29px 0 24px;
  border-radius: 30px 30px 0 30px;
  background: #fff;
  box-shadow: 0 2px 8px rgba(60, 80, 60, 0.25);
`;
const ComposerTail = styled.svg`
  position: absolute;
  left: 1279px;
  bottom: 0;
  width: 14px;
  height: 40px;
  fill: #fff;
`;
const MenuButton = styled.button`
  display: grid;
  place-items: center;
  width: 76px;
  height: 60px;
  padding: 0;
  border: 0;
  border-radius: 30px;
  background: ${BLUE};
`;
const Icon = styled.svg`
  flex: none;
  display: block;
  width: ${(p) => p.$size}px;
  height: ${(p) => p.$size}px;
  margin-left: ${(p) => p.$left || 0}px;
  fill: none;
  stroke: ${(p) => p.$color};
  stroke-width: ${(p) => p.$stroke || 4};
  stroke-linecap: round;
  stroke-linejoin: round;
`;
const Placeholder = styled.div`
  flex: 1;
  margin-left: 32px;
  font-size: 32px;
  line-height: 42px;
  color: #a2a7ae;
`;
const RoundButton = styled.button`
  display: grid;
  place-items: center;
  width: 108px;
  height: 108px;
  padding: 0;
  border: 0;
  border-radius: 50%;
  background: ${(p) => (p.$blue ? BLUE : "#fff")};
  box-shadow: 0 2px 10px rgba(60, 80, 60, 0.28);
`;
const ScrollDown = styled.div`
  position: absolute;
  right: 89px;
  bottom: 128px;
`;
const ReplyPanel = styled.div`
  position: absolute;
  right: 213px;
  bottom: 128px;
  display: flex;
  gap: 10px;
  width: 840px;
  height: 136px;
  padding: 20px;
  border-radius: 20px;
  background: #fff;
  box-shadow: 0 6px 34px rgba(50, 60, 60, 0.25);
`;
const ReplyButton = styled.button`
  flex: 1;
  display: flex;
  align-items: center;
  justify-content: center;
  gap: 8px;
  padding: 2px 0 0;
  border: 4px solid ${BLUE};
  border-radius: 12px;
  background: #fff;
  font: 500 30px/36px Roboto, sans-serif;
  color: ${BLUE};
`;

/* ---------- drawings ---------- */

const Smile = ({ size = 32, lift = -2 }) => (
  <Emoji viewBox="0 0 32 32" $size={size} $lift={lift} role="img">
    <defs>
      <radialGradient id="face" cx=".5" cy=".4" r=".6">
        <stop offset="0" stopColor="#ffe765" />
        <stop offset=".6" stopColor="#fdcf47" />
        <stop offset="1" stopColor="#f09c36" />
      </radialGradient>
      <radialGradient id="cheek">
        <stop offset="0" stopColor="#f4704a" stopOpacity=".6" />
        <stop offset="1" stopColor="#f4704a" stopOpacity="0" />
      </radialGradient>
    </defs>
    <circle cx="16.5" cy="16" r="15" fill="url(#face)" />
    <circle cx="7" cy="18" r="4.5" fill="url(#cheek)" />
    <circle cx="26" cy="18" r="4.5" fill="url(#cheek)" />
    <path d="M9.5 14.2C9.8 10 13.5 10 13.8 14.2M19.2 14.2C19.5 10 23.2 10 23.5 14.2M10.5 19.8C13.5 23.6 19.5 23.6 22.5 19.8" fill="none" stroke="#6b4212" strokeWidth="1.7" strokeLinecap="round" />
  </Emoji>
);

const Dizzy = ({ size = 32, lift = -2 }) => (
  <Emoji viewBox="0 0 32 32" $size={size} $lift={lift} role="img">
    <path d="M1.4 9.5C-.2 3.4 2.6 -.2 8 1.2C16 3.4 25.5 12 29.6 20.5C33.2 28 31.4 32.6 25.6 31.9C20.8 31.3 16.8 29.4 13.6 27.2L14.6 25.6C19 28 24.6 30 27.4 28C30 25.6 28.6 21.6 27.4 19.4C23 11.4 14.6 4.4 8 2.4C3.4 1 1.4 4 2.2 9Z" fill="#efb044" />
    <path d="M1.4 9.5C-.2 3.4 2.6 -.2 8 1.2C12.6 2.4 17.6 5.8 21.8 10.2L21 11C16.8 6.8 12.2 3.7 8 2.4C3.4 1 1.4 4 2.2 9Z" fill="#f9da7c" />
    <path d="M12.4 13.4L13.4 18.2L18 19L14.6 22L16.4 26.8L11.6 25.2L7.2 28.6L7.2 23.6L3.6 20.6L8.6 19.2Z" fill="#f6bc4a" stroke="#e9a03e" strokeWidth=".8" strokeLinejoin="round" />
    <path d="M11.5 17.6L12.2 20.2L14.8 20.6L12.8 22.2L13.4 24.4L11.2 23.6L9 25L9.1 22.6L7.3 21.2L9.8 20.4Z" fill="#fff0b5" />
  </Emoji>
);

const Checks = () => (
  <Icon viewBox="0 0 34 28" $color={OUT_GREEN} $stroke={2.6} $size={34}>
    <path d="M2 15.5L8.5 20.5L23.5 4M16.5 17.8L19.5 20.5L33 4" />
  </Icon>
);

function Message({ out, time, long, width, command, radius, tail = true, children }) {
  const base = out ? "30px 30px 0 30px" : "30px 30px 30px 0";
  return (
    <Bubble $out={out} $long={long} $width={width} $radius={radius || base}>
      <Text $long={long} $command={command}>{children}</Text>
      <Meta $out={out}>
        {time}
        {out && <Checks />}
      </Meta>
      {tail && (
        <Tail $out={out} viewBox="0 0 14 30">
          <path d="M14 0C13.8 10 9.5 20 .9 27.3C-.5 28.6 .2 30 1.8 30H14Z" />
        </Tail>
      )}
    </Bubble>
  );
}

const HowAreYou = () => (<><span>Как дела? </span><Smile /></>);
const RandomNumber = () => (<><Dizzy /><span> Рандомное число!</span></>);

const Choices = () => (
  <Keyboard>
    <InlineButton>Хорошо</InlineButton>
    <InlineButton $last>Не очень</InlineButton>
  </Keyboard>
);

export default function App() {
  return (
    <Page>
      <Global />
      <Wallpaper />
      <TopBar />
      <Messages>
        <Group $out><Message out time="14:10"><RandomNumber /></Message></Group>
        <Group><Message time="14:10">58</Message></Group>
        <Group $out><Message out time="14:10"><HowAreYou /></Message></Group>
        <Group>
          <Message time="14:10" width={376} radius="30px 30px 10px 0">Отлично, сам как?</Message>
          <Choices />
        </Group>
        <Group $out><Message out command time="14:10">/start</Message></Group>
        <Group $out><Message out time="14:21"><HowAreYou /></Message></Group>
        <Group>
          <Message long time="14:21" width={960} radius="30px 30px 30px 10px" tail={false}>
            Привет, <b>Wins <u>None</u></b> я пока что знаю только: Hello id inf и{"\n"}
            photo, если хочешь что то добавить обратись к владельцу
          </Message>
          <Message time="14:21" radius="10px 30px 30px 10px" tail={false}><HowAreYou /></Message>
          <Message time="14:21" radius="10px 30px 30px 0"><span>Вот и отлично </span><Smile /></Message>
        </Group>
        <Group $out><Message out time="14:21"><RandomNumber /></Message></Group>
        <Group><Message time="14:21">28</Message></Group>
        <Group $out><Message out time="14:21"><HowAreYou /></Message></Group>
        <Group>
          <Message time="14:21" width={376} radius="30px 30px 10px 0">Отлично, сам как?</Message>
          <Choices />
        </Group>
        <Group $out><Message out time="14:21">id</Message></Group>
        <Group><Message time="14:21" width={700}>Скоро будет,а пока я тебя не</Message></Group>
        <Group $out><Message out time="14:21">id</Message></Group>
      </Messages>
      <Footer>
        <Composer>
          <MenuButton aria-label="Menu">
            <Icon viewBox="0 0 40 40" $size={40} $color="#fff" $stroke={3.4}>
              <path d="M6 11.4H34.2M6 20H34.2M6 28.6H34.2" />
            </Icon>
          </MenuButton>
          <Icon viewBox="0 0 48 48" $size={48} $left={26} $color={GREY}>
            <circle cx="24" cy="24" r="20" />
            <path d="M14.4 29.5C18 36 30 36 33.6 29.5" strokeWidth="3.6" />
            <ellipse cx="17.8" cy="18.8" rx="2.6" ry="3.1" fill={GREY} stroke="none" />
            <ellipse cx="30.4" cy="18.8" rx="2.6" ry="3.1" fill={GREY} stroke="none" />
          </Icon>
          <Placeholder>Message</Placeholder>
          <Icon viewBox="0 0 48 48" $size={48} $color={BLUE}>
            <path d="M18 18V11a7 7 0 1 0 -7 7H37a7 7 0 1 0 -7 -7V37a7 7 0 1 0 7 -7H11a7 7 0 1 0 7 7Z" />
          </Icon>
          <Icon viewBox="0 0 48 48" $size={48} $left={49} $color={GREY} $stroke={3.8}>
            <path d="M24.6 16.8L15.5 27.3C11.5 33 18 37.5 22 33L36.3 17.6C43 9.8 32.5 .8 25.3 7.6L10.4 23.3C-.2 34.5 12.8 47.8 24.4 39.6L36.6 28.6" />
          </Icon>
          <ComposerTail viewBox="0 0 14 40">
            <path d="M0 0H1C1 18 4.5 28 12.5 37C14 38.8 13 40 11.5 40H0Z" />
          </ComposerTail>
        </Composer>
        <RoundButton $blue aria-label="Record">
          <Icon viewBox="0 0 48 48" $size={48} $color="#fff">
            <rect x="16" y="4" width="16.4" height="27" rx="8.2" fill="#fff" stroke="none" />
            <path d="M9 22C9 43 39 43 39 22M24 38.5V43.5" />
          </Icon>
        </RoundButton>
      </Footer>
      <ReplyPanel>
        <ReplyButton><Dizzy size={30} lift={0} />Рандомное число!</ReplyButton>
        <ReplyButton>Как дела?<Smile size={30} lift={0} /></ReplyButton>
      </ReplyPanel>
      <ScrollDown>
        <RoundButton aria-label="Scroll to bottom">
          <Icon viewBox="0 0 48 48" $size={48} $color={GREY} $stroke={4.2}>
            <path d="M24 10.4V37.6M10.4 23.8L24 37.6L37.6 23.8" />
          </Icon>
        </RoundButton>
      </ScrollDown>
    </Page>
  );
}
